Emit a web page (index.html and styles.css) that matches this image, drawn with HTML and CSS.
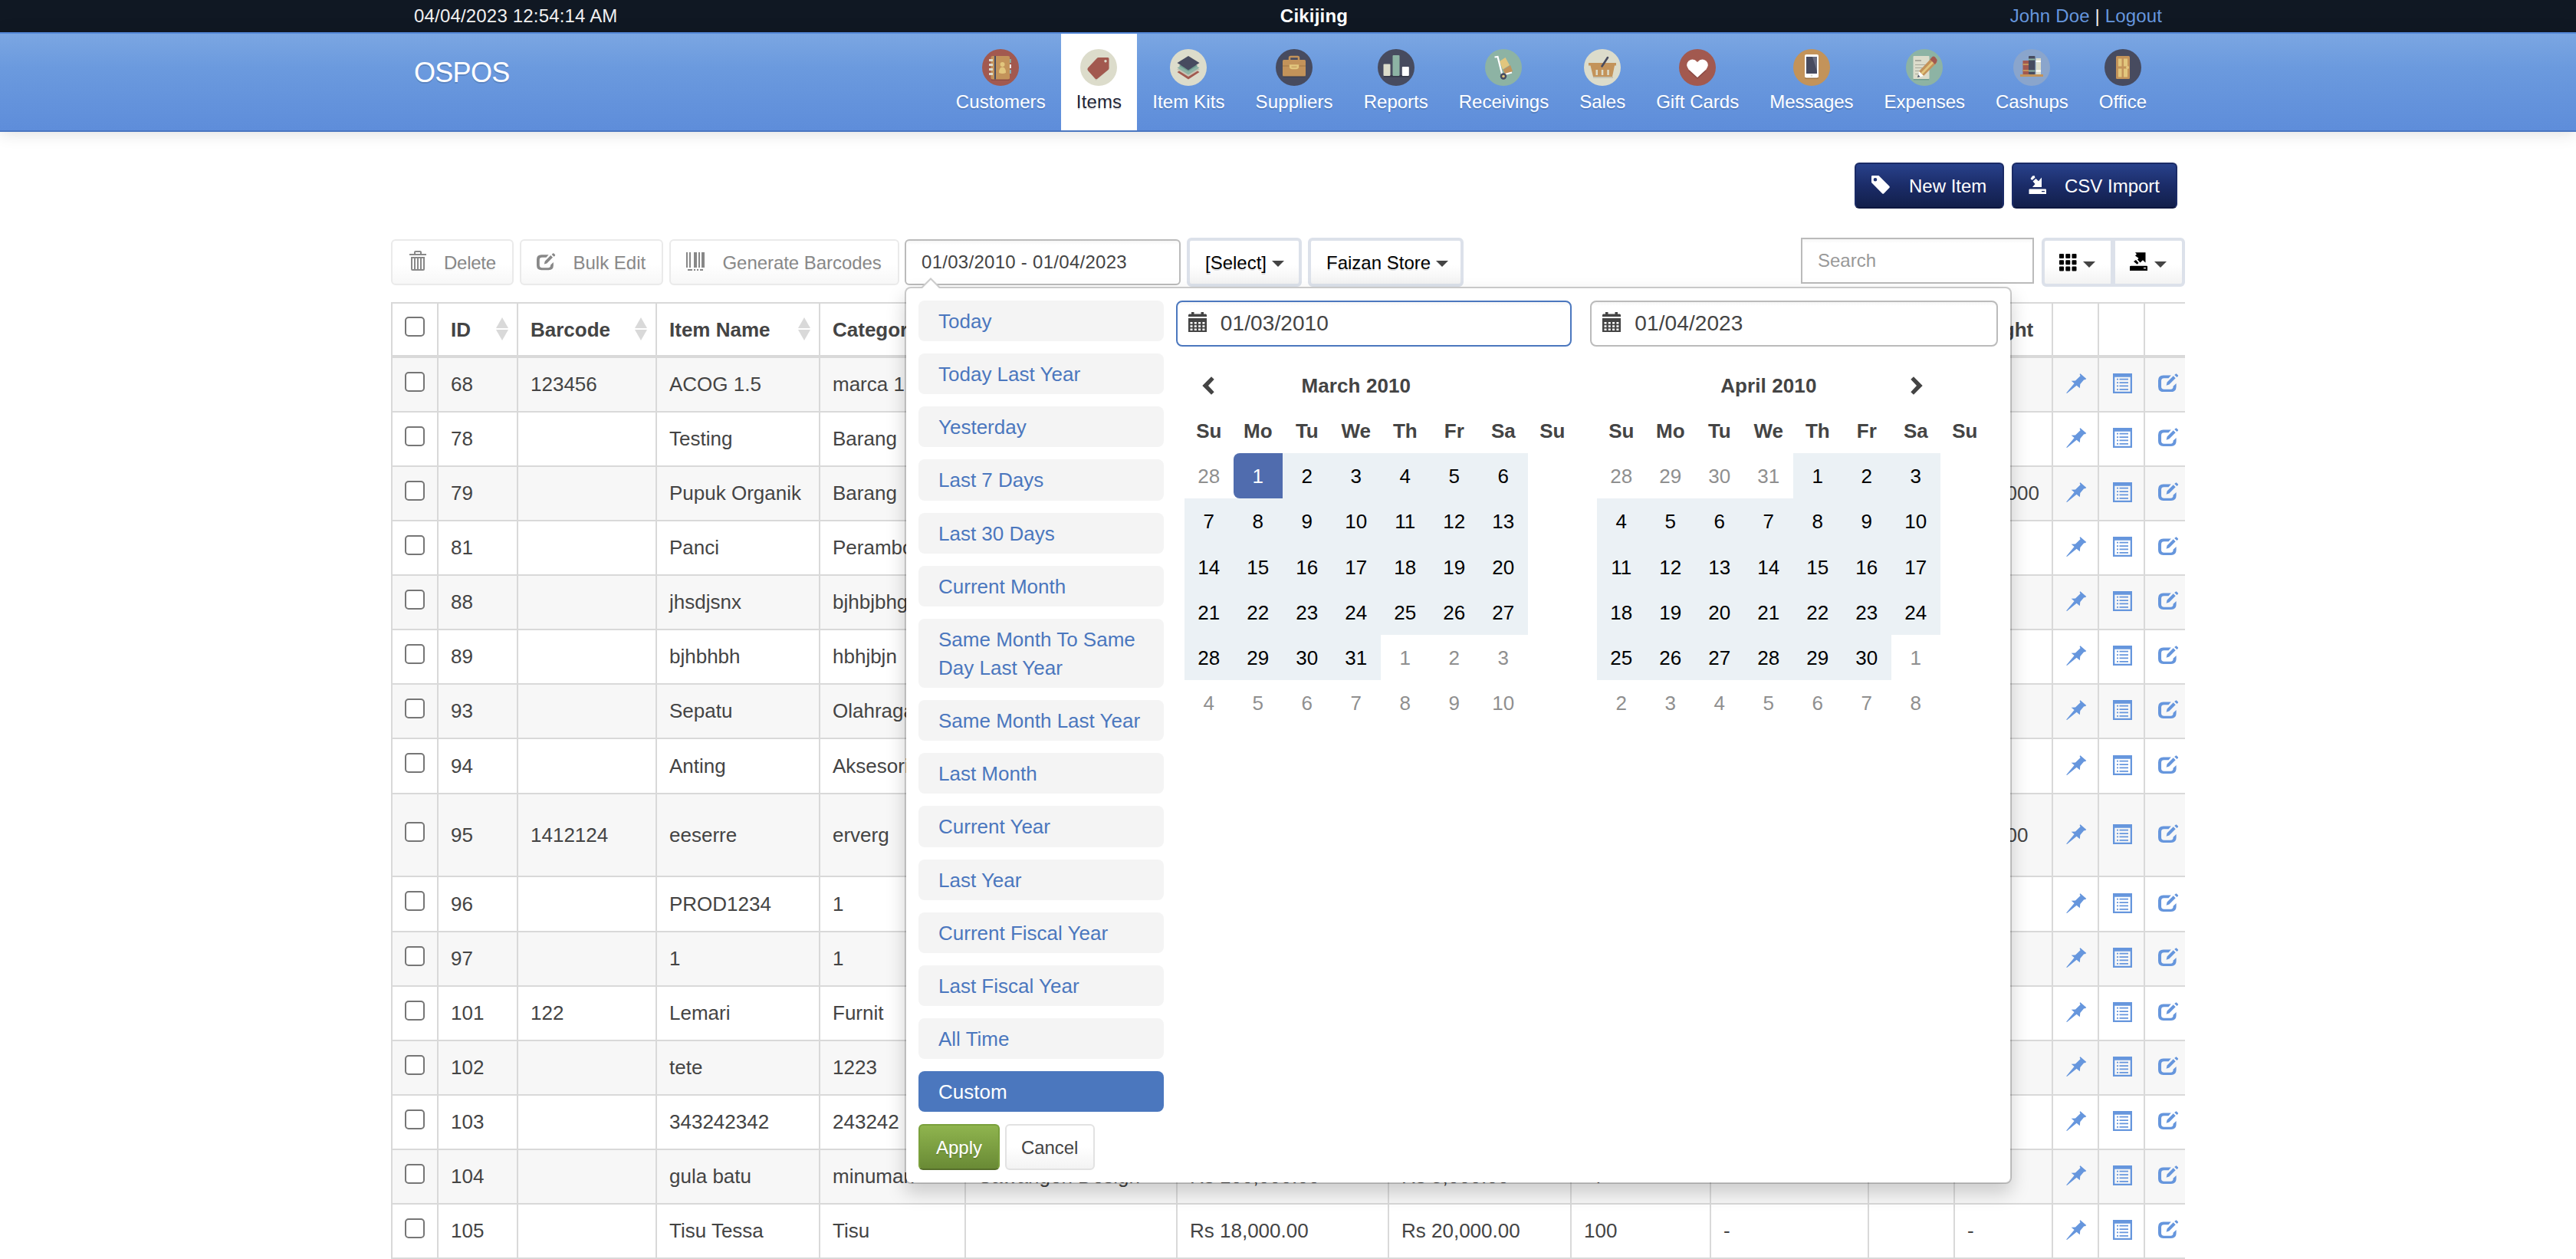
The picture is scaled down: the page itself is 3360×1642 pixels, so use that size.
FILE: index.html
```html
<!DOCTYPE html>
<html lang="en">
<head>
<meta charset="utf-8">
<title>OSPOS - Items</title>
<link rel="stylesheet" href="styles.css">
</head>
<body>
<svg class="sprite" aria-hidden="true">
  <symbol id="i-tag" viewBox="0 0 24 24"><path fill-rule="evenodd" d="M0 1.2V9l14 14.3q1.2 1 2.300 0L23.300 16q1-1.100 0-2.200L9.500 0H1.200Q0 0 0 1.200ZM5 3a2.300 2.300 0 1 1 0 4.600A2.300 2.300 0 0 1 5 3Z"/></symbol>
  <symbol id="i-import" viewBox="0 0 24 24"><path fill-rule="evenodd" d="M17 2.500V15H5l3.500-4L5.500 7.500 9.500 4l3.500 3.200ZM5 .5 7.500 0 8.500 2.500 4.500 6 2.500 4ZM1.500 17.500H22q1 0 1 1V24H.5v-5.500q0-1 1-1ZM17 20v1.300h4V20Z"/></symbol>
  <symbol id="i-export" viewBox="0 0 24 24"><path fill-rule="evenodd" d="M7 .2h13.500V13.500L17 10.300 13.500 13.500 10 9.500 11.500 7.800 7 4.500 9 2.500ZM8 10l3.500 4-2 1.800L5 12ZM1.500 17.800H22q1 0 1 1V24H0v-5.200q0-1 1.500-1ZM18 20v1.200h3V20Z"/></symbol>
  <symbol id="i-trash" viewBox="0 0 22 26"><path fill-rule="evenodd" d="M6 4V2q0-2 2-2h6q2 0 2 2v2h6v2H0V4ZM8 4h6V2H8ZM2 8h18v16q0 2-2 2H4q-2 0-2-2ZM4 10v14h2V10Zm4 0v14h2V10Zm4 0v14h2V10Zm4 0v14h2V10Z"/></symbol>
  <symbol id="i-edit" viewBox="0 0 28 26"><path d="M17.500 2H7Q0 2 0 9v8.500q0 7 7 7h10.500q7 0 7-7V13l-4.200 4v.5q0 3.500-3.500 3.500H8q-3.800 0-3.800-3.500V9.500Q4.200 6 8 6h6Z"/><path d="M11 15.800l1-4.300L20.500 3l3 3-8.600 8.600ZM22 1.700 23.600.2q.8-.6 1.500 0l1.700 1.700q.6.8 0 1.500l-1.500 1.400Z"/></symbol>
  <symbol id="i-barcode" viewBox="0 0 24 24"><path d="M0 0h2v20H0ZM4 0h2v20H4ZM10 0h4v20h-4ZM16 0h2v20h-2ZM20 0h4v20h-4ZM2 22h6v2H2ZM10 22h2v2h-2ZM14 22h2v2h-2ZM18 22h4v2h-4Z"/></symbol>
  <symbol id="i-th" viewBox="0 0 23 23"><path d="M1 0h4q1 0 1 1v4q0 1-1 1H1Q0 6 0 5V1Q0 0 1 0Zm8.300 0h4q1 0 1 1v4q0 1-1 1h-4q-1 0-1-1V1q0-1 1-1Zm8.200 0h4q1 0 1 1v4q0 1-1 1h-4q-1 0-1-1V1q0-1 1-1ZM1 8.200h4q1 0 1 1v4q0 1-1 1H1q-1 0-1-1v-4q0-1 1-1Zm8.300 0h4q1 0 1 1v4q0 1-1 1h-4q-1 0-1-1v-4q0-1 1-1Zm8.200 0h4q1 0 1 1v4q0 1-1 1h-4q-1 0-1-1v-4q0-1 1-1ZM1 16.400h4q1 0 1 1v4q0 1-1 1H1q-1 0-1-1v-4q0-1 1-1Zm8.300 0h4q1 0 1 1v4q0 1-1 1h-4q-1 0-1-1v-4q0-1 1-1Zm8.200 0h4q1 0 1 1v4q0 1-1 1h-4q-1 0-1-1v-4q0-1 1-1Z"/></symbol>
  <symbol id="i-pin" viewBox="0 0 27 26"><path d="M18.500.2 26.300 7 24.700 8.300 23.200 8.200 18.300 14 17.800 19.200 13.600 15.700 1 26 .2 25.400 10.600 13 6.700 9.700 12 9.400 18.500 3.300 17.600 1Z"/></symbol>
  <symbol id="i-list" viewBox="0 0 25 26"><path fill-rule="evenodd" d="M0 0h25v26H0ZM2.300 4.800v19h20.400v-19Z"/><path d="M5 6.800h2v1.700H5Zm3.500 0H20v1.700H8.500ZM5 11.200h2v1.700H5Zm3.500 0H20v1.700H8.500ZM5 15.600h2v1.700H5Zm3.500 0H20v1.700H8.500ZM5 20h2v1.700H5Zm3.500 0H20v1.700H8.500Z"/></symbol>
  <symbol id="i-calendar" viewBox="0 0 24 26"><path fill-rule="evenodd" d="M0 6V4q0-1.500 1.500-1.500H4V0h3.500v2.500h9V0H20v2.500h2.500Q24 2.500 24 4v2ZM0 8h24v18H0ZM2.500 13v2.500h3V13Zm5.300 0v2.500h3V13Zm5.300 0v2.500h3V13Zm5.300 0v2.500h3V13ZM2.500 17.200v2.500h3v-2.500Zm5.300 0v2.500h3v-2.500Zm5.300 0v2.500h3v-2.500Zm5.300 0v2.500h3v-2.500ZM2.500 21.400v2.500h3v-2.500Zm5.300 0v2.500h3v-2.500Zm5.300 0v2.500h3v-2.500Zm5.300 0v2.500h3v-2.500Z"/></symbol>
  <symbol id="i-prev" viewBox="0 0 16 24"><path d="M12 .3 15.700 3.800 8 12l7.700 8.200L12 23.700.3 12Z"/></symbol>
  <symbol id="i-next" viewBox="0 0 16 24"><path d="M4 .3.3 3.800 8 12 .3 20.200 4 23.700 15.700 12Z"/></symbol>
</svg>

<header class="topbar"><div class="container topbar-row">
  <span class="clock">04/04/2023 12:54:14 AM</span>
  <strong class="company">Cikijing</strong>
  <span class="user"><a>John Doe</a> | <a>Logout</a></span>
</div></header>

<nav class="navbar"><div class="container navbar-row">
  <span class="brand">OSPOS</span>
  <ul class="menu">
    <li><svg viewBox="0 0 48 48"><circle cx="24" cy="24" r="24" fill="#a2594f"/><path fill="#8b4a43" d="M12 39.500h23.500v1.500H12Z"/><path fill="#8db3a4" d="M35 13h2.800v5H35Z"/><path fill="#fff" d="M35 20h2.800v5H35Z"/><path fill="#84b5c0" d="M35 27h2.800v5H35Z"/><rect x="11.500" y="9" width="24.500" height="30.500" rx="2" fill="#c3935a"/><path fill="#474b5f" d="M16 9h2v30.500h-2Z"/><path fill="#dcdccb" d="M9 13h5v3H9Zm0 6h5v3H9Zm0 6h5v3H9Zm0 6h5v3H9Z"/><circle cx="26.500" cy="20" r="3" fill="#e2c67d"/><path fill="#e2c67d" d="M22 31q0-7.500 4.500-7.500T31 31q-4.500 2-9 0Z"/></svg>Customers</li>
    <li class="active"><svg viewBox="0 0 48 48"><circle cx="24" cy="24" r="24" fill="#dcdccb"/><path fill="#c6c4b4" d="M11 28 20.500 41 37.500 26.500V23Z"/><path fill="#a2594f" fill-rule="evenodd" d="M36 11H24q-1.500 0-2.500 1.200L10 24.500q-1.300 1.700 0 3.500l9.500 10.500q1.500 1.300 3 0L36.500 27q1-1 1-2.500v-12Q37.500 11 36 11Zm-3 3a1.700 1.700 0 1 1-.01 0Z"/></svg>Items</li>
    <li><svg viewBox="0 0 48 48"><circle cx="24" cy="24" r="24" fill="#dcdccb"/><path fill="#a2594f" d="M9.500 30 24 21l14.500 9L24 39.500Z"/><path fill="#c6c4b4" d="M9.500 27 24 36l14.500-9v-1h-29Z"/><path fill="#8db3a4" d="M9.500 24.500 24 15.500l14.500 9L24 33.500Z"/><path fill="#6f9d90" d="M12 22 24 29l12-7-1-1H13Z"/><path fill="#474b5f" d="M9.500 18 24 9l14.500 9L24 27.500Z"/></svg>Item Kits</li>
    <li><svg viewBox="0 0 48 48"><circle cx="24" cy="24" r="24" fill="#474b5f"/><path fill="none" stroke="#c3935a" stroke-width="2.500" d="M18 15v-3.500q0-1.500 1.500-1.500h9q1.500 0 1.500 1.500V15"/><path fill="#353848" d="M10 35h28v1.500H10Z"/><rect x="9" y="14" width="30" height="21.500" rx="1.500" fill="#c3935a"/><path fill="#9e7444" d="M9 21.500h30v1H9Z"/><path fill="none" stroke="#e2c67d" stroke-width="2.500" d="M19 21.500h10v1q0 2.500-2.500 2.500h-5Q19 25 19 22.500Z"/></svg>Suppliers</li>
    <li><svg viewBox="0 0 48 48"><circle cx="24" cy="24" r="24" fill="#474b5f"/><path fill="#353848" d="M8 34h33v2.500H8Z"/><rect x="7.500" y="19.500" width="9" height="15.500" rx="1" fill="#dcdccb"/><rect x="19.500" y="8" width="9" height="27" rx="1" fill="#8db3a4"/><rect x="31.800" y="23" width="9" height="12" rx="1" fill="#fff"/></svg>Reports</li>
    <li><svg viewBox="0 0 48 48"><circle cx="24" cy="24" r="24" fill="#8db3a4"/><path fill="#e2c67d" d="m19 16 7.500-5 5.500 10-9 5.500Z"/><path fill="#c3935a" d="m23.500 27 9.500-6 3 8-9 5Z"/><path fill="none" stroke="#fff" stroke-width="2.200" d="M12.500 10.500 16.500 10l6 24L35 30.500"/><circle cx="24" cy="35.500" r="4.200" fill="#474b5f"/><circle cx="24" cy="35.500" r="1.800" fill="#e2c67d"/></svg>Receivings</li>
    <li><svg viewBox="0 0 48 48"><circle cx="24" cy="24" r="24" fill="#dcdccb"/><path fill="#c6c4b4" d="M12 36h26v2H12Z"/><path fill="#c3935a" fill-rule="evenodd" d="M6 18h36v3.500h-2L37 36H12L8.500 21.500H6ZM15.500 27v7h2.500v-7Zm7.300 0v7h2.500v-7Zm7.500 0v7h2.500v-7Z"/><path stroke="#474b5f" stroke-width="2.600" stroke-linecap="round" d="M31 11 23.500 22.500"/></svg>Sales</li>
    <li><svg viewBox="0 0 48 48"><circle cx="24" cy="24" r="24" fill="#a2594f"/><path fill="#8b4a43" d="M12 28 24 39l12-11Z"/><path fill="#fff" d="M24 37 12.500 26.500Q8 20 12.500 15.500 18.500 11 24 17q5.500-6 11.500-1.500Q40 20 35.500 26.500Z"/></svg>Gift Cards</li>
    <li><svg viewBox="0 0 48 48"><circle cx="24" cy="24" r="24" fill="#c3935a"/><path fill="#9e7444" d="M15.500 36h17v3h-17Z"/><rect x="15" y="7" width="18" height="30.500" rx="2" fill="#fff"/><path fill="#474b5f" d="M17 10h14v22H17Z"/><path fill="#6a6e82" d="M25 10h6v19Z"/><circle cx="24" cy="34.500" r="1.300" fill="#dcdccb"/></svg>Messages</li>
    <li><svg viewBox="0 0 48 48"><circle cx="24" cy="24" r="24" fill="#8db3a4"/><path fill="#6f9d90" d="M10 38.500h20v2H10Z"/><rect x="9.500" y="9" width="21" height="30" rx="1" fill="#dcdccb"/><path fill="#a9a99c" d="M12 14h8v2h-8Zm0 6h14v1H12Zm0 4h12v1H12Zm0 4h9v1h-9Zm0 4h7v1h-7Z"/><path fill="#c3935a" d="m17 29 17-18 6.500 6.500L23 35Z"/><path fill="#e2c67d" d="m19.500 31 17-17.500 2 2L21.500 33Z"/><path fill="#a2594f" d="m31.500 13.500 2.500-3q2-2 4.500.5t2 5L38 20Z"/><path fill="#fff" d="m17 29 6 6-7 2Z"/><path fill="#474b5f" d="m16 33.500 2.500 2.500-3.500 1Z"/></svg>Expenses</li>
    <li><svg viewBox="0 0 48 48"><circle cx="24" cy="24" r="24" fill="#8aa5cc"/><path fill="#a2594f" d="M12.500 15h7.500v18h-7.500Z"/><path fill="#c3935a" d="M12.500 19h7.500v2h-7.500Zm0 8h7.500v2h-7.500Z"/><rect x="20" y="9" width="8.500" height="24" rx="1" fill="#474b5f"/><path fill="#8db3a4" d="M20 12.500h8.500v2H20Zm0 15h8.500v2H20Z"/><path fill="#dcdccb" d="M29.500 12H36v21h-6.500Z"/><path fill="#fff" d="M29.500 15H36v2h-6.500Zm0 12.500H36v2h-6.500Z"/><path fill="#c3935a" d="M9 33h30v3H9Z"/></svg>Cashups</li>
    <li><svg viewBox="0 0 48 48"><circle cx="24" cy="24" r="24" fill="#474b5f"/><rect x="15" y="9" width="18" height="30" rx="1.500" fill="#c3935a"/><path fill="#e2c67d" d="M18 12.500h4.500v10H18Zm7 0h5v10h-5ZM18 25.500h4.500v11H18Zm7 0h5v11h-5Z"/><circle cx="30" cy="24" r="2" fill="#e2c67d"/></svg>Office</li>
  </ul>
</div></nav>

<main class="container page">
  <div class="title-bar">
    <button class="btn btn-info"><svg><use href="#i-tag"/></svg>New Item</button>
    <button class="btn btn-info btn-csv"><svg><use href="#i-import"/></svg>CSV Import</button>
  </div>

  <div class="toolbar">
    <button class="btn tool tool-delete"><svg><use href="#i-trash"/></svg>Delete</button>
    <button class="btn tool tool-bulk"><svg><use href="#i-edit"/></svg>Bulk Edit</button>
    <button class="btn tool tool-barcode"><svg><use href="#i-barcode"/></svg>Generate Barcodes</button>
    <div class="range">
      <div class="range-field">01/03/2010 - 01/04/2023</div>
      <section class="picker">
        <div class="ranges">
          <ul>
            <li>Today</li><li>Today Last Year</li><li>Yesterday</li><li>Last 7 Days</li><li>Last 30 Days</li><li>Current Month</li><li>Same Month To Same Day Last Year</li><li>Same Month Last Year</li><li>Last Month</li><li>Current Year</li><li>Last Year</li><li>Current Fiscal Year</li><li>Last Fiscal Year</li><li>All Time</li><li class="active">Custom</li>
          </ul>
          <div class="actions"><button class="btn apply">Apply</button><button class="btn cancel">Cancel</button></div>
        </div>
        <div class="calendar cal-left">
          <div class="date-input focused"><svg><use href="#i-calendar"/></svg>01/03/2010</div>
          <div class="month" data-month="March 2010" data-lead="28" data-lead-count="1" data-days="31" data-active="1" data-arrow="prev"></div>
        </div>
        <div class="calendar cal-right">
          <div class="date-input"><svg><use href="#i-calendar"/></svg>01/04/2023</div>
          <div class="month" data-month="April 2010" data-lead="28" data-lead-count="4" data-days="30" data-arrow="next"></div>
        </div>
      </section>
    </div>
    <button class="btn select select-type">[Select]<i class="caret"></i></button>
    <button class="btn select select-store">Faizan Store<i class="caret"></i></button>
    <div class="search">Search</div>
    <div class="group">
      <button><svg class="th"><use href="#i-th"/></svg><i class="caret"></i></button>
      <button><svg class="export"><use href="#i-export"/></svg><i class="caret"></i></button>
    </div>
  </div>

  <div class="table-wrap">
    <table class="items">
      <colgroup><col class="w-60"><col class="w-104"><col class="w-181"><col class="w-213"><col class="w-190"><col class="w-276"><col class="w-276"><col class="w-238"><col class="w-182"><col class="w-206"><col class="w-112"><col class="w-128"><col class="w-60"><col class="w-60"><col class="w-60"></colgroup>
      <thead><tr><th><span class="check"></span></th><th class="sort">ID</th><th class="sort">Barcode</th><th class="sort">Item Name</th><th>Category</th><th></th><th></th><th></th><th></th><th></th><th></th><th>Weight</th><th></th><th></th><th></th></tr></thead>
      <tbody id="rows"></tbody>
    </table>
  </div>
</main>
<script src="app.js"></script>
</body>
</html>
```

FILE: styles.css
```css
* { box-sizing: border-box; }
html, body { margin: 0; height: 1642px; overflow: hidden; }
body { width: 3360px; background: #fff; color: #444; font: 26px/37.14px "Liberation Sans", Arial, sans-serif; }
ul { margin: 0; padding: 0; list-style: none; }
button { font: inherit; color: inherit; margin: 0; padding: 0; background: none; border: 0; }
svg { display: block; flex: none; fill: currentColor; }
.sprite { display: none; }
.container { width: 2340px; margin: 0 auto; }

.topbar { height: 42px; background: #101823; color: #f0f0f0; font-size: 24px; line-height: 42px; }
.topbar-row { display: grid; grid-template-columns: 1fr auto 1fr; padding: 0 30px; }
.clock { letter-spacing: .18px; }
.company { padding-left: 68px; color: #fff; letter-spacing: .2px; }
.user { text-align: right; letter-spacing: .15px; }
.user a { color: #6696dd; }

.navbar { height: 130px; border-top: 2px solid #5588d8; border-bottom: 2px solid #4b77c1; background: linear-gradient(#7ba6e2, #6b9ade 35%, #5e8dda); box-shadow: 0 2px 20px rgba(0, 0, 0, .13); color: #fff; }
.navbar-row { display: flex; justify-content: space-between; padding: 0 30px; }
.brand { font-size: 36px; line-height: 40px; padding-top: 31px; letter-spacing: -.7px; text-shadow: 0 2px 0 rgba(0, 0, 0, .15); }
.menu { display: flex; font-size: 24px; line-height: 34px; text-shadow: 0 2px 0 rgba(0, 0, 0, .15); }
.menu li { height: 126px; padding: 20px 20px 0; display: flex; flex-direction: column; align-items: center; gap: 4px; white-space: nowrap; }
.menu li:nth-child(-n+4) { letter-spacing: .12px; }
.menu svg { width: 48px; height: 48px; }
.menu .active { background: #fff; color: #1f2536; }

.title-bar { display: flex; justify-content: flex-end; gap: 10px; padding: 40px 10px 0 0; }
.btn { display: flex; align-items: center; height: 60px; border: 2px solid #eaeaea; border-radius: 6px; font-size: 24px; line-height: 34px; white-space: nowrap; text-shadow: 0 2px 0 rgba(0, 0, 0, .05); }
.btn-info { width: 195px; padding: 1px 0 0 20px; color: #fff; background: linear-gradient(#28418b, #1b2c68 50%, #121f4b); border-color: #1b2b66 #1b2b66 #0d1740; }
.btn-info svg { width: 24px; height: 24px; margin: -4px 25px 0 0; }
.btn-csv { width: 216px; }
.btn-csv svg { margin-right: 23px; }

.toolbar { display: flex; align-items: flex-start; gap: 7.5px; height: 84px; margin-top: 38px; }
.toolbar > .tool, .range { margin-top: 2px; }
.tool { padding: 1px 0 0 22px; color: #888; background: linear-gradient(#fff 55%, #f7f7f7); }
.tool svg { width: 22px; height: 26px; margin: -5px 23px 0 0; }
.tool-delete { width: 160px; letter-spacing: -.25px; }
.tool-bulk { width: 187.5px; padding-left: 20.5px; }
.tool-bulk svg { width: 25px; height: 24px; margin: -2px 22.5px 0 0; }
.tool-barcode { width: 300px; padding-left: 20.5px; letter-spacing: -.05px; }
.tool-barcode svg { width: 24px; height: 24px; margin: -3px 23.5px 0 0; }

.range { position: relative; width: 360px; }
.range-field { height: 60px; padding-left: 20px; border: 2px solid #bbb; border-radius: 6px; background: linear-gradient(#f6f6f6, #fff 5px); font-size: 24px; line-height: 55px; letter-spacing: .28px; }
.select { height: 64px; padding: 1px 0 0 20.5px; border: 4px solid #dce1ea; background: linear-gradient(#fff 55%, #f3f3f3); color: #000; text-shadow: 0 2px 0 rgba(0, 0, 0, .12); }
.select-type { width: 150.5px; }
.select-store { width: 203.5px; }
.caret { margin: 4px 0 0 8px; border: 8px solid transparent; border-top-color: #444; border-bottom: 0; }
.select .caret { margin: 2px 0 0 6.500px; }
.search { width: 304px; height: 60px; margin: 0 2.5px 0 auto; padding-left: 20px; border: 2px solid #bbb; background: linear-gradient(#f6f6f6, #fff 5px); color: #999; font-size: 24px; line-height: 55px; }
.group { display: flex; width: 187px; height: 64px; border: 4px solid #dce1ea; border-radius: 6px; background: linear-gradient(#fff 55%, #f3f3f3); color: #000; }
.group button { display: flex; align-items: center; width: 86px; padding-left: 19px; }
.group button + button { width: 93px; border-left: 6px solid #dce1ea; }
.group .caret { margin-top: 6px; }
.group .th { width: 23px; height: 23px; }
.group .export { width: 24px; height: 24px; margin-top: -3px; }

.picker { position: absolute; z-index: 5; top: 62px; left: 0; display: flex; width: 1444px; height: 1170px; padding: 16px 16px 0; border: 2px solid rgba(0, 0, 0, .2); border-radius: 8px; background: #fff; background-clip: padding-box; box-shadow: 0 12px 24px rgba(0, 0, 0, .175); }
.picker::before, .picker::after { content: ""; position: absolute; left: 20px; top: -14px; border: 12px solid transparent; border-bottom-color: #ccc; border-top: 0; }
.picker::after { top: -11px; border-bottom-color: #fff; }
.ranges { width: 320px; }
.ranges li { margin-bottom: 16px; padding: 9px 24px 7px 26px; border-radius: 8px; background: #f4f4f4; color: #4b77be; }
.ranges .active { background: #4b77be; color: #fff; }
.actions { display: flex; gap: 7px; }
.apply { width: 106px; padding: 1px 0 0 21px; color: #fff; background: linear-gradient(#8fb44e, #698a35); border-color: #7aa03c #7aa03c #566f2c; text-shadow: 0 2px 0 rgba(0, 0, 0, .15); }
.cancel { width: 117px; padding: 1px 0 0 19px; background: linear-gradient(#fff 50%, #f3f3f3); border-color: #e2e2e2; letter-spacing: -.1px; }
.cal-left { width: 516px; margin-left: 16px; }
.cal-right { width: 532px; margin-left: 24.500px; }
.date-input { display: flex; align-items: center; height: 60px; padding: 0 0 0 14px; border: 2px solid #bbb; border-radius: 8px; background: linear-gradient(#f6f6f6, #fff 5px); font-size: 28px; letter-spacing: .1px; }
.focused { border-color: #4b77be; }
.date-input svg { width: 24px; height: 26px; margin: -5px 18px 0 0; }
.month { display: grid; grid-template-columns: repeat(8, 64px); grid-auto-rows: 59.14px; align-items: stretch; margin: 21px 0 0 11px; line-height: 60.5px; text-align: center; color: #000; }
.cal-right .month { margin-left: 8.500px; }
.month b { color: #444; }
.month .name { grid-column: 2 / span 5; letter-spacing: .1px; }
.month .arrow { display: grid; place-items: center; color: #444; }
.cal-left .arrow { padding-right: 2px; }
.cal-right .arrow { padding-left: 3px; }
.month svg { width: 16px; height: 24px; }
.month .in { background: #ebf1f5; }
.month .off { color: #8f8f8f; }
.month .on { background: #506cae; color: #fff; border-radius: 8px 0 0 8px; }

.table-wrap { overflow: hidden; }
.items { width: 2348px; table-layout: fixed; border-spacing: 0; border: solid #d9d9d9; border-width: 2px 0 0 2px; }
.items th, .items td { height: 71px; padding: 0 16px; border: solid #d9d9d9; border-width: 0 2px 2px 0; text-align: left; white-space: nowrap; line-height: 37px; }
.items th { border-bottom-width: 4px; padding-top: 1px; }
.items .sort { position: relative; }
.sort::before, .sort::after { content: ""; position: absolute; right: 11px; top: 18px; border: 8px solid transparent; border-bottom: 14px solid #d9d9d9; border-top: 0; }
.sort::after { top: 34px; border-bottom: 0; border-top: 14px solid #d9d9d9; }
.items tbody tr:nth-child(odd) { background: #f7f7f7; }
.items .tall td { height: 108px; }
.items .plus td { height: 72px; }
.items svg { width: 27px; height: 26px; margin: 0 0 3px .5px; color: #6696dd; }
.check { display: block; width: 26px; height: 26px; margin-bottom: 8px; border: 2px solid #767676; border-radius: 5px; background: #fff; }
.w-60 { width: 60px; } .w-104 { width: 104px; } .w-181 { width: 181px; } .w-213 { width: 213px; } .w-190 { width: 190px; }
.w-276 { width: 276px; } .w-238 { width: 238px; } .w-182 { width: 182px; } .w-206 { width: 206px; } .w-112 { width: 112px; } .w-128 { width: 128px; }
```

FILE: app.js
```js
// id, barcode, name, category, company, cost, price, quantity, tax, avatar, weight
const items = [
  [68, "123456", "ACOG 1.5", "marca 1"],
  [78, "", "Testing", "Barang"],
  [79, "", "Pupuk Organik", "Barang", "", "", "", "", "", "", "500,000"],
  [81, "", "Panci", "Perambot"],
  [88, "", "jhsdjsnx", "bjhbjbhg"],
  [89, "", "bjhbhbh", "hbhjbjn"],
  [93, "", "Sepatu", "Olahraga"],
  [94, "", "Anting", "Aksesoris"],
  [95, "1412124", "eeserre", "erverg", "", "", "", "", "", "", "30,000"],
  [96, "", "PROD1234", "1"],
  [97, "", "1", "1"],
  [101, "122", "Lemari", "Furnit"],
  [102, "", "tete", "1223"],
  [103, "", "343242342", "243242"],
  [104, "", "gula batu", "minuman", "Sawangen Design", "Rs 100,000.00", "Rs 5,000.00", "-4"],
  [105, "", "Tisu Tessa", "Tisu", "", "Rs 18,000.00", "Rs 20,000.00", "100", "-", "", "-"],
];

const icon = (name) => `<svg><use href="#i-${name}"/></svg>`;
const tallRow = 95;
const looseRows = [94, 96];

document.getElementById("rows").innerHTML = items.map((item) => {
  const cells = item.slice();
  while (cells.length < 11) cells.push("");
  const cls = item[0] === tallRow ? "tall" : looseRows.includes(item[0]) ? "plus" : "";
  return `<tr class="${cls}"><td><span class="check"></span></td>` +
    cells.map((c) => `<td>${c}</td>`).join("") +
    ["pin", "list", "edit"].map((n) => `<td>${icon(n)}</td>`).join("") + "</tr>";
}).join("");

document.querySelectorAll(".month").forEach((el) => {
  const { month, lead, leadCount, days, active, arrow } = el.dataset;
  const button = `<span class="arrow">${icon(arrow)}</span>`;
  const blank = "<span></span>";
  const out = [
    arrow === "prev" ? button : blank,
    `<b class="name">${month}</b>`,
    arrow === "next" ? button : blank,
    blank,
    ..."Su Mo Tu We Th Fr Sa Su".split(" ").map((d) => `<b>${d}</b>`),
  ];
  for (let i = 0; i < 42; i++) {
    const n = i - leadCount + 1;
    let text = n, cls = "in";
    if (n < 1) { text = +lead + i; cls = "off"; }
    if (n > days) { text = n - days; cls = "off"; }
    if (n === +active) cls = "on";
    out.push(`<span class="${cls}">${text}</span>`);
    if (i % 7 === 6) out.push(blank);
  }
  el.innerHTML = out.join("");
});
```
